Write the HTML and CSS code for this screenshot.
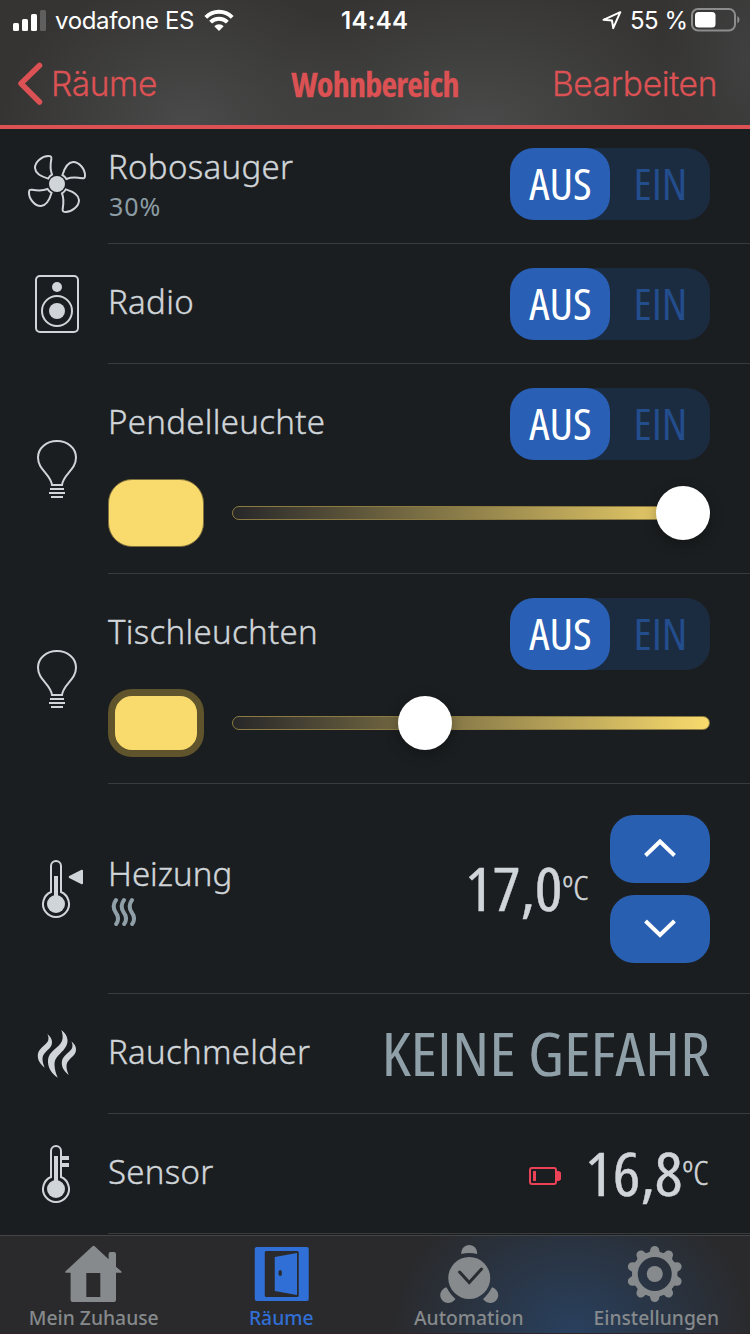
FILE: index.html
```html
<!DOCTYPE html>
<html lang="de">
<head>
<meta charset="utf-8">
<title>Wohnbereich</title>
<link rel="stylesheet" href="styles.css">
</head>
<body>
<svg class="defs" aria-hidden="true">
  <symbol id="fan" viewBox="0 0 60 60">
    <g fill="none" stroke="currentColor" stroke-width="2">
      <path id="blade" d="M21.2 24.6C14 22.5 8.3 19 8 14C7.8 8 15 1.8 21.8 2C24 2 24.6 3 24.3 5C23.4 10 23.2 16 25 20.6Q22.6 22 21.2 24.6Z"/>
      <use href="#blade" transform="rotate(90 30 30)"/>
      <use href="#blade" transform="rotate(180 30 30)"/>
      <use href="#blade" transform="rotate(270 30 30)"/>
    </g>
    <circle cx="30" cy="30" r="8" fill="currentColor"/>
  </symbol>
  <symbol id="speaker" viewBox="0 0 60 60">
    <g fill="none" stroke="currentColor" stroke-width="2">
      <rect x="9" y="2" width="42" height="56" rx="4"/>
      <circle cx="30" cy="37" r="15"/>
    </g>
    <circle cx="30" cy="13" r="5" fill="currentColor"/>
    <circle cx="30" cy="37" r="8" fill="currentColor"/>
  </symbol>
  <symbol id="bulb" viewBox="0 0 60 60">
    <g fill="none" stroke="currentColor" stroke-width="2">
      <path d="M25 46C23.5 35 11 31 11 18.5C11 9 19.5 2 30 2S49 9 49 18.5C49 31 36.5 35 35 46Z"/>
      <path d="M23 50H37M22 54H38M24 58H36"/>
    </g>
  </symbol>
  <symbol id="thermo" viewBox="0 0 60 60">
    <path d="M24 33V7a5 5 0 0 1 10 0V33A13 13 0 1 1 24 33Z" fill="none" stroke="currentColor" stroke-width="2"/>
    <circle cx="29" cy="45" r="9" fill="currentColor"/>
  </symbol>
</svg>

<header class="header">
  <div class="status">
    <svg class="signal" viewBox="0 0 34 22" fill="#fff">
      <rect x="0" y="14" width="6" height="8" rx="1.5"/><rect x="9" y="10" width="6" height="12" rx="1.5"/>
      <rect x="18" y="5" width="6" height="17" rx="1.5"/><rect x="27" y="1" width="6" height="21" rx="1.5" fill="#5f5f5f"/>
    </svg>
    <span class="carrier">vodafone ES</span>
    <svg class="wifi" viewBox="0 0 30 22">
      <g fill="none" stroke="#fff" stroke-width="4">
        <path d="M1.8 8.3A18.7 18.7 0 0 1 28.2 8.3"/>
        <path d="M6.6 13.2A11.9 11.9 0 0 1 23.4 13.2"/>
      </g>
      <path d="M10.3 17.2A6.6 6.6 0 0 1 19.7 17.2L15 22Z" fill="#fff"/>
    </svg>
    <span class="clock">14:44</span>
    <svg class="location" viewBox="0 0 20 20"><path d="M1.5 9.8L18.3 2.2L11.2 18.2L10 10.6Z" fill="none" stroke="#fff" stroke-width="2" stroke-linejoin="round"/></svg>
    <span class="percent">55 %</span>
    <svg class="battery" viewBox="0 0 49 24">
      <rect x="1" y="1" width="43" height="21.5" rx="6" fill="none" stroke="#8d8d8d" stroke-width="2"/>
      <rect x="4" y="4" width="20.5" height="15.500" rx="3.500" fill="#fff"/>
      <path d="M46.300 8Q48.500 9 48.500 11.750T46.300 15.500Z" fill="#8d8d8d"/>
    </svg>
  </div>
  <nav class="nav">
    <a class="back"><svg viewBox="0 0 26 44"><path d="M22.500 3.500L4 21.500L22.500 40" fill="none" stroke="currentColor" stroke-width="5.500" stroke-linecap="round" stroke-linejoin="round"/></svg><span>Räume</span></a>
    <h1 class="title"><span>Wohnbereich</span></h1>
    <a class="edit">Bearbeiten</a>
  </nav>
</header>

<main class="list">
  <section class="row row-first">
    <svg class="icon"><use href="#fan"/></svg>
    <div class="body">
      <div class="labels"><h2 class="name">Robosauger</h2><p class="sub">30%</p></div>
      <div class="toggle"><b class="off"><span>AUS</span></b><b class="on"><span>EIN</span></b></div>
    </div>
  </section>
  <section class="row">
    <svg class="icon"><use href="#speaker"/></svg>
    <div class="body">
      <h2 class="name">Radio</h2>
      <div class="toggle"><b class="off"><span>AUS</span></b><b class="on"><span>EIN</span></b></div>
    </div>
  </section>
  <section class="row row-tall">
    <svg class="icon"><use href="#bulb"/></svg>
    <div class="body body-light">
      <div class="line">
        <h2 class="name">Pendelleuchte</h2>
        <div class="toggle"><b class="off"><span>AUS</span></b><b class="on"><span>EIN</span></b></div>
      </div>
      <div class="line">
        <div class="swatch"></div>
        <div class="slider"><div class="track"></div><div class="thumb" style="left:424px"></div></div>
      </div>
    </div>
  </section>
  <section class="row row-tall">
    <svg class="icon"><use href="#bulb"/></svg>
    <div class="body body-light">
      <div class="line">
        <h2 class="name">Tischleuchten</h2>
        <div class="toggle"><b class="off"><span>AUS</span></b><b class="on"><span>EIN</span></b></div>
      </div>
      <div class="line">
        <div class="swatch swatch-ring"></div>
        <div class="slider"><div class="track"></div><div class="thumb" style="left:166px"></div></div>
      </div>
    </div>
  </section>
  <section class="row row-tall">
    <svg class="icon" viewBox="0 0 60 60"><use href="#thermo"/><path d="M27 17h4v20h-4z" fill="currentColor"/><path d="M42.700 18L55 11.700V24.300Z" fill="currentColor" stroke="currentColor" stroke-width="2" stroke-linejoin="round"/></svg>
    <div class="body">
      <div class="labels labels-heat"><h2 class="name">Heizung</h2>
        <svg class="heat" viewBox="0 0 28 32"><path d="M6 4C3 8 3 12 5.500 16C8.500 20 9 24 6.200 28M14 4C11 8 11 12 13.500 16C16.500 20 17 24 14.200 28M22 4C19 8 19 12 21.500 16C24.500 20 25 24 22.200 28" fill="none" stroke="currentColor" stroke-width="4" stroke-linecap="round"/></svg>
      </div>
      <div class="temp"><span class="value">17,0</span><span class="unit">ºC</span></div>
      <div class="stepper">
        <button class="step"><svg viewBox="0 0 32 20"><path d="M1.500 16.500L16 2.500L30.500 16.500" fill="none" stroke="#fff" stroke-width="4"/></svg></button>
        <button class="step"><svg viewBox="0 0 32 20"><path d="M1.500 2L16 16L30.500 2" fill="none" stroke="#fff" stroke-width="4"/></svg></button>
      </div>
    </div>
  </section>
  <section class="row">
    <svg class="icon" viewBox="0 0 60 60" fill="currentColor">
      <path d="M34.300 6C41 11 42.500 18 38 24C34 30 27 33 27.500 41C27.700 46 29 50 30.800 53.700C24 49 20.500 43 21 36C21.500 27 32 24 35 17C36.300 13.500 35.500 9 34.300 6Z"/>
      <path id="wisp" d="M20.300 10C25 13.500 26.500 19 23.500 23C20.500 27 15.500 29.500 15.500 35C15.500 38 16.500 41 17.700 43.700C13 40 10.500 36 10.800 31C11.300 24 19 21.500 21 17C22 14.500 21.300 12 20.300 10Z"/>
      <use href="#wisp" transform="translate(24 7.200)"/>
    </svg>
    <div class="body">
      <h2 class="name">Rauchmelder</h2>
      <div class="state">KEINE GEFAHR</div>
    </div>
  </section>
  <section class="row">
    <svg class="icon" viewBox="0 0 60 60"><use href="#thermo"/><path d="M27 12h4v25h-4zM34 12h8v4h-8zM34 19h8v4h-8z" fill="currentColor"/></svg>
    <div class="body">
      <h2 class="name">Sensor</h2>
      <svg class="low" viewBox="0 0 33 18"><rect x="1" y="1" width="26" height="16" rx="2" fill="none" stroke="currentColor" stroke-width="2"/><path d="M4 4h3v10H4zM27 4h3l2 1.500v7L30 14h-3z" fill="currentColor"/></svg>
      <div class="temp temp-last"><span class="value">16,8</span><span class="unit">ºC</span></div>
    </div>
  </section>
</main>

<footer class="tabs">
  <a class="tab">
    <svg viewBox="0 0 60 60" fill="currentColor" fill-rule="evenodd"><path d="M1.300 27.500L28.500 2.300Q29.600 1.200 30.700 2.300L44.600 15.300V10Q44.600 8 46.600 8H50Q52 8 52 10V22.700L57.500 27.500V28.700H52V56Q52 58 50 58H8.600Q6.600 58 6.600 56V28.700H1.300ZM22.300 29V53H36.300V29Z"/></svg>
    <span>Mein Zuhause</span>
  </a>
  <a class="tab tab-active">
    <svg viewBox="0 0 60 60" fill="currentColor" fill-rule="evenodd"><path d="M5.750 3h50a2 2 0 0 1 2 2v50a2 2 0 0 1-2 2h-50a2 2 0 0 1-2-2V5a2 2 0 0 1 2-2ZM15.250 7a1.500 1.500 0 0 0-1.500 1.500v43a1.500 1.500 0 0 0 1.500 1.500h31a1.500 1.500 0 0 0 1.500-1.500v-43A1.500 1.500 0 0 0 46.250 7Z"/><path d="M23.750 13L46 9V51L23.750 47ZM29.200 26a1.700 3 0 0 0 0 6a1.700 3 0 0 0 0-6Z"/></svg>
    <span>Räume</span>
  </a>
  <a class="tab">
    <svg viewBox="0 0 60 60" fill="currentColor"><circle cx="30.250" cy="34" r="21"/><path d="M20.600 28L30.250 38.500L42.500 25" fill="none" stroke="#292c31" stroke-width="3" stroke-linecap="round"/>
      <path d="M22.250 10C22.250 4.500 25.500 1 30.250 1S38.250 4.500 38.250 10Q30.250 8 22.250 10Z"/>
      <path id="foot" d="M7.500 43.300C10 48 13 52 16.500 55C14 58 11 59 9 59C4.500 59 1.250 55 1.250 51C1.250 48 3.500 44.500 7.500 43.300Z"/>
      <use href="#foot" transform="matrix(-1 0 0 1 60.500 0)"/></svg>
    <span>Automation</span>
  </a>
  <a class="tab">
    <svg viewBox="0 0 60 60" fill="currentColor"><circle cx="28.750" cy="30" r="19.800" fill="none" stroke="currentColor" stroke-width="5.600"/><circle cx="28.750" cy="30" r="8"/>
      <g id="pair"><path id="tooth" d="M21.200 9Q24.200 8.500 24.300 6C24.600 3.600 26.500 2 28.750 2S32.900 3.600 33.200 6Q33.300 8.500 36.300 9L35 12H22.500Z"/><use href="#tooth" transform="rotate(180 28.750 30)"/></g>
      <use href="#pair" transform="rotate(36 28.750 30)"/><use href="#pair" transform="rotate(72 28.750 30)"/><use href="#pair" transform="rotate(108 28.750 30)"/><use href="#pair" transform="rotate(144 28.750 30)"/></svg>
    <span>Einstellungen</span>
  </a>
</footer>
</body>
</html>
```
FILE: styles.css
```css
* { box-sizing: border-box; margin: 0; padding: 0; }

body {
  width: 750px;
  height: 1334px;
  overflow: hidden;
  display: flex;
  flex-direction: column;
  background: #1b1e20;
  color: #d0d5d9;
  font-family: "Noto Sans", "Open Sans", sans-serif;
}

svg { display: block; flex: none; }
.defs { position: absolute; width: 0; height: 0; }

/* header */
.header {
  height: 129px;
  flex: none;
  border-bottom: 4px solid #dc5254;
  background:
    radial-gradient(ellipse 190px 150px at 190px 125px, #4a4a4a, transparent),
    radial-gradient(ellipse 230px 150px at 480px 125px, #494a49, transparent),
    radial-gradient(ellipse 90px 150px at 750px 60px, #404040, transparent),
    #353433;
}
.status {
  height: 40px;
  display: flex;
  align-items: center;
  padding-left: 13px;
  color: #fff;
  font: 400 24px/40px Inter, sans-serif;
  white-space: nowrap;
}
.status span { padding-top: 2px; }
.signal { width: 34px; height: 22px; margin-right: 8px; }
.carrier { width: 149px; letter-spacing: -.35px; }
.wifi { width: 30px; height: 22px; }
.clock { width: 68px; margin-left: 107px; font-weight: 600; letter-spacing: .3px; }
.location { width: 20px; height: 20px; margin-left: 193px; }
.percent { width: 61px; margin-left: 8px; letter-spacing: -.5px; }
.battery { width: 49px; height: 24px; }
.nav {
  height: 85px;
  display: grid;
  grid-template-columns: 250px 250px 250px;
  align-items: center;
  padding-top: 3px;
  color: #dc5254;
  font: 300 33.5px/48px Inter, sans-serif;
  letter-spacing: -.35px;
  -webkit-text-stroke: .3px currentColor;
}
.back { display: flex; align-items: center; padding-left: 17px; }
.back svg { width: 26px; height: 44px; margin-right: 8px; }
.title { text-align: center; font: 700 34px/48px "Open Sans", sans-serif; font-stretch: 75%; letter-spacing: -.75px; }
.edit { padding-right: 33px; text-align: right; }

/* rows */
.row {
  height: 120px;
  flex: none;
  display: flex;
  align-items: center;
  padding-left: 27px;
}
.row-first { height: 115px; align-items: flex-end; }
.row-first .icon { margin-bottom: 30px; }
.row-first .body { height: 120px; }
.row-tall { height: 210px; }
.icon { width: 60px; height: 60px; margin-right: 21px; }
.body {
  flex: 1;
  height: 100%;
  display: flex;
  align-items: center;
  padding-right: 40px;
  border-bottom: 1px solid #393c3d;
}
.body-light { flex-direction: column; align-items: stretch; gap: 19px; padding-top: 24px; }
.line { display: flex; align-items: center; }
.name {
  margin-right: auto;
  padding-bottom: 4px;
  font-weight: 300;
  font-size: 33px;
  line-height: 44px;
  letter-spacing: .3px;
  -webkit-text-stroke: .4px currentColor;
  white-space: nowrap;
}
.labels { margin-right: auto; }
.sub { color: #8b9ca5; font-size: 25px; line-height: 26px; letter-spacing: 1px; padding: 0 0 4px 1px; }
.labels-heat { padding-top: 3px; }
.labels-heat .name { padding-bottom: 0; letter-spacing: 0; }

.toggle {
  width: 200px;
  height: 72px;
  display: flex;
  border-radius: 24px;
  background: #1c2c40;
  font: 400 43px/71px "Open Sans", sans-serif;
  font-stretch: 75%;
  text-align: center;
}
.toggle b { width: 100px; font-weight: 400; border-radius: 24px; }
.toggle span { display: inline-block; transform: scaleX(1.06); }
.off { background: #295fb4; color: #fff; }
.on { color: #234d8c; }

.swatch { width: 96px; height: 68px; border: 1px solid #80703b; border-radius: 24px; background: #f9db6d; }
.swatch-ring { border: 7px solid #5f542b; }
.slider { position: relative; width: 478px; height: 54px; margin-left: 28px; padding-top: 20px; }
.track { height: 14px; border-radius: 7px; border: 1px solid #8c7b40; background: linear-gradient(90deg, #272729, #f9db6d) border-box; }
.thumb { position: absolute; top: 0; width: 54px; height: 54px; border-radius: 50%; background: #fff; box-shadow: 0 4px 14px rgba(0, 0, 0, .3); }

.heat { width: 28px; height: 32px; margin-left: 2px; color: #8fa0a9; }
.temp {
  display: flex;
  margin-right: 22px;
  padding-bottom: 1px;
  font-family: "Open Sans", sans-serif;
  font-stretch: 75%;
  transform: scaleX(1.07);
  transform-origin: right;
}
.temp-last { margin-right: 2px; }
.value { font-size: 61px; line-height: 80px; -webkit-text-stroke: .4px currentColor; }
.unit { font-size: 33px; line-height: 80px; font-weight: 300; -webkit-text-stroke: .5px currentColor; }
.stepper { display: flex; flex-direction: column; gap: 12px; }
.step { width: 100px; height: 68px; border: 0; border-radius: 24px; background: #295fb0; display: flex; align-items: center; justify-content: center; }
.step svg { width: 32px; height: 20px; }
.state {
  padding-bottom: 2px;
  color: #8fa0a9;
  font: 400 61px/80px "Open Sans", sans-serif;
  font-stretch: 75%;
  white-space: nowrap;
  transform: scaleX(1.088);
  transform-origin: right;
}
.low { width: 33px; height: 18px; margin: 4px 31px 0 0; color: #ec4257; }

/* tab bar */
.tabs {
  height: 99px;
  margin-top: 1px;
  flex: none;
  display: grid;
  grid-template-columns: repeat(4, 1fr);
  border-top: 1px solid #424446;
  border-bottom: 1px solid #30232a;
  color: #868a8c;
  background: radial-gradient(ellipse 180px 150px at 572px 95px, #29405e, transparent), #2a2a2c;
}
.tab { display: flex; flex-direction: column; align-items: center; padding-top: 8px; font-size: 19.3px; line-height: 28px; font-weight: 500; white-space: nowrap; }
.tab svg { width: 60px; height: 60px; }
.tab-active { color: #306fd6; }
```
